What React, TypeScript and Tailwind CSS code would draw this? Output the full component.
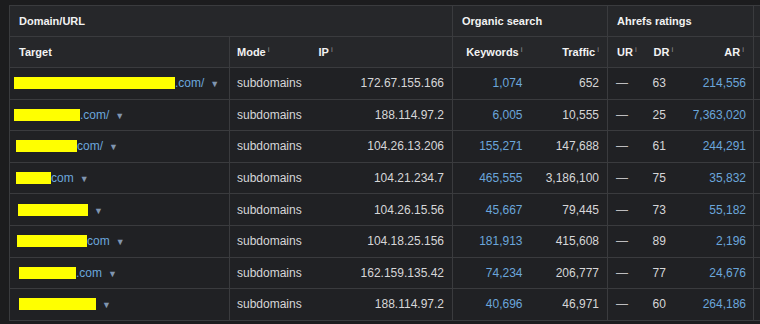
const rows = [
    { ml: 0, w: 161, suffix: ".com/", ip: "172.67.155.166", kw: "1,074", traffic: "652", dr: "63", ar: "214,556" },
    { ml: 0, w: 66, suffix: ".com/", ip: "188.114.97.2", kw: "6,005", traffic: "10,555", dr: "25", ar: "7,363,020" },
    { ml: 2, w: 61, suffix: "com/", ip: "104.26.13.206", kw: "155,271", traffic: "147,688", dr: "61", ar: "244,291" },
    { ml: 2, w: 35, suffix: "com", ip: "104.21.234.7", kw: "465,555", traffic: "3,186,100", dr: "75", ar: "35,832" },
    { ml: 4, w: 70, suffix: "", ip: "104.26.15.56", kw: "45,667", traffic: "79,445", dr: "73", ar: "55,182" },
    { ml: 3, w: 70, suffix: "com", ip: "104.18.25.156", kw: "181,913", traffic: "415,608", dr: "89", ar: "2,196" },
    { ml: 5, w: 57, suffix: ".com", ip: "162.159.135.42", kw: "74,234", traffic: "206,777", dr: "77", ar: "24,676" },
    { ml: 5, w: 77, suffix: "", ip: "188.114.97.2", kw: "40,696", traffic: "46,971", dr: "60", ar: "264,186" },
];

function Info() {
    return <sup className="ml-[2px] top-[-0.5em] text-[8px] font-normal text-[#8d8d90]">i</sup>;
}

export default function App() {
    return (
        <div className="h-[324px] w-[760px] overflow-hidden bg-[#1c1c1e] pl-[9px] pt-[5px]" style={{ fontFamily: '"Liberation Sans", Arial, sans-serif' }}>
            <table className="w-[851px] table-fixed border-collapse border-l border-t border-[#3a3b3e] text-[12px] text-[#d6d6d8]">
                <colgroup>
                    <col className="w-[220px]" />
                    <col className="w-[81px]" />
                    <col className="w-[142px]" />
                    <col className="w-[78px]" />
                    <col className="w-[77px]" />
                    <col className="w-[38px]" />
                    <col className="w-[45px]" />
                    <col className="w-[63px]" />
                    <col className="w-[107px]" />
                </colgroup>
                <thead className="bg-[#26272a] text-[11px] font-bold text-[#f2f2f2]">
                    {/* Group headers */}
                    <tr className="h-[31px] border-b border-[#3a3b3e]">
                        <th colSpan={3} className="border-r border-[#3a3b3e] pl-[9px] text-left">Domain/URL</th>
                        <th colSpan={2} className="border-r border-[#3a3b3e] pl-[9px] text-left">Organic search</th>
                        <th colSpan={3} className="border-r border-[#3a3b3e] pl-[9px] text-left">Ahrefs ratings</th>
                        <th></th>
                    </tr>
                    {/* Column headers */}
                    <tr className="h-[31px] border-b border-[#3a3b3e]">
                        <th className="border-r border-[#3a3b3e] pl-[9px] text-left">Target</th>
                        <th className="pl-[7px] text-left">Mode<Info /></th>
                        <th className="border-r border-[#3a3b3e] pl-[8px] text-left">IP<Info /></th>
                        <th className="pr-[8px] text-right">Keywords<Info /></th>
                        <th className="border-r border-[#3a3b3e] pr-[8px] text-right">Traffic<Info /></th>
                        <th className="pl-[9px] text-left">UR<Info /></th>
                        <th className="pl-[8px] text-left">DR<Info /></th>
                        <th className="border-r border-[#3a3b3e] pr-[9px] text-right">AR<Info /></th>
                        <th></th>
                    </tr>
                </thead>
                <tbody className="bg-[#202124]">
                    {rows.map((r, i) => (
                        <tr key={i} className="h-[31.6px] border-b border-[#3a3b3e]">
                            <td className="border-r border-[#3a3b3e] pl-[4px] whitespace-nowrap">
                                <span className="inline-block h-[12px] bg-[#ffff00] align-[-2px]" style={{ width: r.w, marginLeft: r.ml }}></span>
                                <span className="text-[#6ba6db]">{r.suffix}</span>
                                <span className="ml-[6px] text-[9px] text-[#8095b0]">▼</span>
                            </td>
                            <td className="pl-[7px]">subdomains</td>
                            <td className="border-r border-[#3a3b3e] pr-[8px] text-right">{r.ip}</td>
                            <td className="pr-[8px] text-right text-[#6ba6db]">{r.kw}</td>
                            <td className="border-r border-[#3a3b3e] pr-[8px] text-right">{r.traffic}</td>
                            <td className="pl-[8px] text-[#bdbdbf]">—</td>
                            <td className="pl-[7px]">{r.dr}</td>
                            <td className="border-r border-[#3a3b3e] pr-[7px] text-right text-[#6ba6db]">{r.ar}</td>
                            <td></td>
                        </tr>
                    ))}
                </tbody>
            </table>
        </div>
    );
}
